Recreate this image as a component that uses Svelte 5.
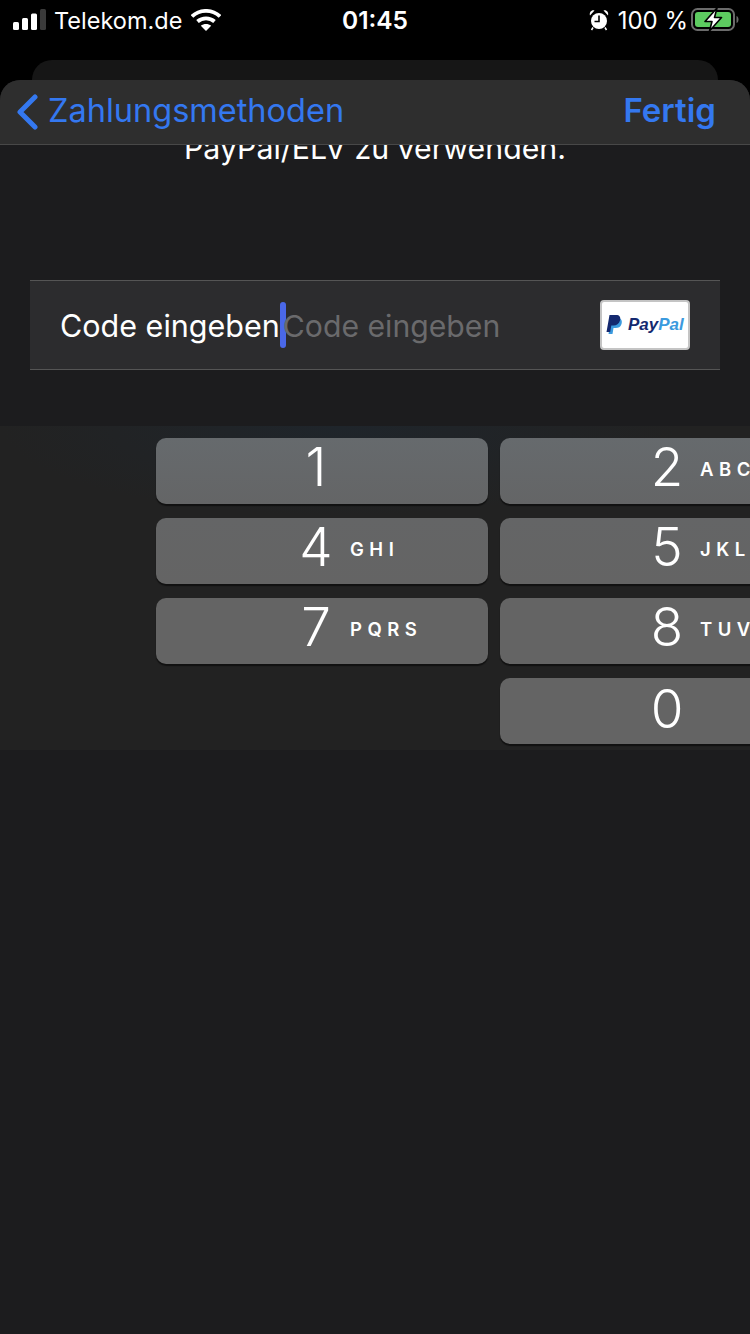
<script>
  const rows = [
    [['1', ''], ['2', 'ABC']],
    [['4', 'GHI'], ['5', 'JKL']],
    [['7', 'PQRS'], ['8', 'TUV']],
    [null, ['0', '']]
  ];
</script>

<div class="page">
  <header class="status">
    <div class="side left">
      <svg class="signal" width="34" height="22" viewBox="0 0 34 22">
        <rect x="0" y="13" width="6" height="8" rx="1.5" fill="#fff"/>
        <rect x="9" y="9" width="6" height="12" rx="1.5" fill="#fff"/>
        <rect x="18" y="4.500" width="6" height="16.500" rx="1.500" fill="#fff"/>
        <rect x="27" y="0" width="6" height="21" rx="1.500" fill="#3a3a3a"/>
      </svg>
      <span class="carrier">Telekom.de</span>
      <svg class="wifi" width="30" height="22" viewBox="0 0 30 22">
        <path d="M1 7.500C8.800 0 21.200 0 29 7.500" fill="none" stroke="#fff" stroke-width="3.800"/>
        <path d="M6.500 12.500C11.300 8.200 18.700 8.200 23.500 12.500" fill="none" stroke="#fff" stroke-width="3.800"/>
        <path d="M15 22L9.800 16.800C12.700 14.300 17.300 14.300 20.200 16.800Z" fill="#fff"/>
      </svg>
    </div>
    <div class="clock">01:45</div>
    <div class="side right">
      <svg class="alarm" width="20" height="22" viewBox="0 0 20 22">
        <circle cx="10" cy="12" r="8" fill="#fff"/>
        <path d="M10 6.500V12.500H5.500" fill="none" stroke="#000" stroke-width="1.600"/>
        <path d="M1 6.500C0 3.500 2.500 0.500 5.500 1.500ZM19 6.500C20 3.500 17.500 0.500 14.500 1.500Z" fill="#fff"/>
        <path d="M4 18.500L2.500 21M16 18.500L17.500 21" stroke="#fff" stroke-width="1.500"/>
      </svg>
      <span class="battery-text">100 %</span>
      <svg class="battery" width="48" height="24" viewBox="0 0 48 24">
        <rect x="1" y="1" width="42" height="21" rx="5.500" fill="none" stroke="#6b6b6b" stroke-width="2"/>
        <rect x="4" y="4" width="36" height="15" rx="3" fill="#5dcb60"/>
        <path d="M45.500 8V15C47 14.500 47.500 13 47.500 11.500S47 8.500 45.500 8Z" fill="#6b6b6b"/>
        <path d="M26 0L14 13.500H21L18.500 23L30.500 9.500H23.500Z" fill="#fff" stroke="#000" stroke-width="1.600" stroke-linejoin="round"/>
      </svg>
    </div>
  </header>

  <div class="back-sheet"></div>

  <main class="sheet">
    <nav class="nav">
      <div class="back">
        <svg width="24" height="36" viewBox="0 0 24 36">
          <path d="M20 3L5 18L20 33" fill="none" stroke="#3478f0" stroke-width="5" stroke-linecap="round" stroke-linejoin="round"/>
        </svg>
        <span>Zahlungsmethoden</span>
      </div>
      <div class="done">Fertig</div>
    </nav>

    <div class="message-clip">
      <p class="message">PayPal/ELV zu verwenden.</p>
    </div>

    <section class="field">
      <span class="label">Code eingeben</span>
      <span class="caret"></span>
      <span class="placeholder">Code eingeben</span>
      <span class="card">
        <svg width="17" height="20" viewBox="0 0 16 20">
          <path d="M5 3H11C15 3 16 6 15 9C14 12 12 13 9 13H7L6 19H2Z" fill="#3b9ade"/>
          <path d="M3 0H9.500C13 0 14.500 2 13.500 5.500C12.500 9 10 10.500 7 10.500H4.800L3.700 17H0Z" fill="#14296f"/>
        </svg>
        <span class="pp"><span class="pay">Pay</span><span class="pal">Pal</span></span>
      </span>
    </section>

    <section class="keyboard">
      {#each rows as row}
        <div class="key-row">
          {#each row as key, i}
            {#if key}
              <div class="key" class:second={i === 1}>
                <span class="digit">{key[0]}</span>
                <span class="letters">{key[1]}</span>
              </div>
            {:else}
              <div class="key-gap"></div>
            {/if}
          {/each}
        </div>
      {/each}
    </section>
  </main>
</div>

<style>
  :global(body) {
    margin: 0;
    background: #000;
  }

  .page {
    width: 750px;
    height: 1334px;
    overflow: hidden;
    display: flex;
    flex-direction: column;
    background: #000;
    color: #fff;
    font-family: Inter, "Liberation Sans", sans-serif;
  }

  .status {
    height: 40px;
    flex: none;
    display: grid;
    grid-template-columns: 1fr auto 1fr;
    align-items: center;
    padding: 0 11px 0 13px;
    box-sizing: border-box;
  }

  .side {
    display: flex;
    align-items: center;
  }

  .right {
    justify-content: flex-end;
  }

  .carrier {
    font-size: 23.5px;
    margin-left: 7px;
  }

  .wifi {
    margin-left: 9px;
  }

  .clock {
    font-size: 24.500px;
    font-weight: 600;
    margin-right: 2px;
  }

  .battery-text {
    font-size: 24px;
    margin-left: 9px;
  }

  .battery {
    margin-left: 3px;
  }

  .back-sheet {
    flex: none;
    height: 20px;
    margin: 20px 32px 0;
    background: #161616;
    border-radius: 20px 20px 0 0;
  }

  .sheet {
    flex: 1;
    display: flex;
    flex-direction: column;
    background: #1c1c1e;
    border-radius: 20px 20px 0 0;
    overflow: hidden;
  }

  .nav {
    flex: none;
    height: 60px;
    display: flex;
    align-items: center;
    justify-content: space-between;
    padding: 0 34px 4px 15px;
    background: #2e2e2e;
    border-bottom: 1px solid #484848;
    font-size: 32.500px;
    color: #3478f0;
  }

  .back {
    display: flex;
    align-items: center;
    gap: 9px;
  }

  .back svg {
    margin-top: 4px;
  }

  .done {
    font-size: 33px;
    font-weight: 600;
  }

  .message-clip {
    height: 135px;
    flex: none;
    overflow: hidden;
  }

  .message {
    margin: -15px 0 0;
    text-align: center;
    font-size: 30.300px;
    line-height: 36px;
    color: #fff;
  }

  .field {
    flex: none;
    height: 90px;
    margin: 0 30px 56px;
    box-sizing: border-box;
    display: flex;
    align-items: center;
    padding: 0 30px 0 30px;
    background: #2c2c2e;
    border-top: 1px solid #555;
    border-bottom: 1px solid #555;
    font-size: 30.500px;
  }

  .label,
  .placeholder {
    padding-top: 1px;
  }

  .caret {
    width: 6px;
    height: 46px;
    margin: 0 -3px 0 0;
    border-radius: 3px;
    background: #4a68e8;
    flex: none;
  }

  .placeholder {
    color: #6a6a6c;
    font-size: 30.200px;
    flex: 1;
  }

  .card {
    width: 90px;
    height: 50px;
    box-sizing: border-box;
    display: flex;
    align-items: center;
    gap: 5px;
    padding-left: 4px;
    background: #fff;
    border: 2px solid #c4c4c4;
    border-radius: 4px;
  }

  .pp {
    font-family: "Liberation Sans", sans-serif;
    font-size: 17px;
    font-weight: 700;
    font-style: italic;
  }

  .pay {
    color: #14296f;
  }

  .pal {
    color: #3b9ade;
  }

  .keyboard {
    flex: none;
    height: 324px;
    box-sizing: border-box;
    padding: 12px 0 0 156px;
    display: flex;
    flex-direction: column;
    gap: 14px;
    background:
      radial-gradient(ellipse 340px 90px at 340px 0, #1f252b, transparent),
      #222;
  }

  .key-row {
    display: flex;
    gap: 12px;
    height: 66px;
    flex: none;
  }

  .key {
    width: 332px;
    height: 66px;
    flex: none;
    box-sizing: border-box;
    padding-left: 140px;
    display: flex;
    align-items: center;
    background: #646464;
    border-radius: 10px;
    box-shadow: 0 2px 1px #111;
  }

  .key-row:nth-child(1) .key {
    background: linear-gradient(#666a6d, #646566);
  }

  .key-row:nth-child(2) .key {
    background: linear-gradient(#646566, #646464);
  }

  .key.second {
    padding-left: 147px;
  }

  .key-gap {
    width: 332px;
    flex: none;
  }

  .digit {
    width: 40px;
    text-align: center;
    font-size: 53px;
    font-weight: 300;
    flex: none;
    margin-top: -8px;
  }

  .key-row:nth-child(4) .digit {
    margin-top: -4px;
  }

  .letters {
    margin-left: 14px;
    margin-top: -4px;
    font-size: 18.500px;
    font-weight: 600;
    letter-spacing: 5.500px;
    white-space: nowrap;
  }

  .key.second .letters {
    margin-left: 13px;
  }
</style>
